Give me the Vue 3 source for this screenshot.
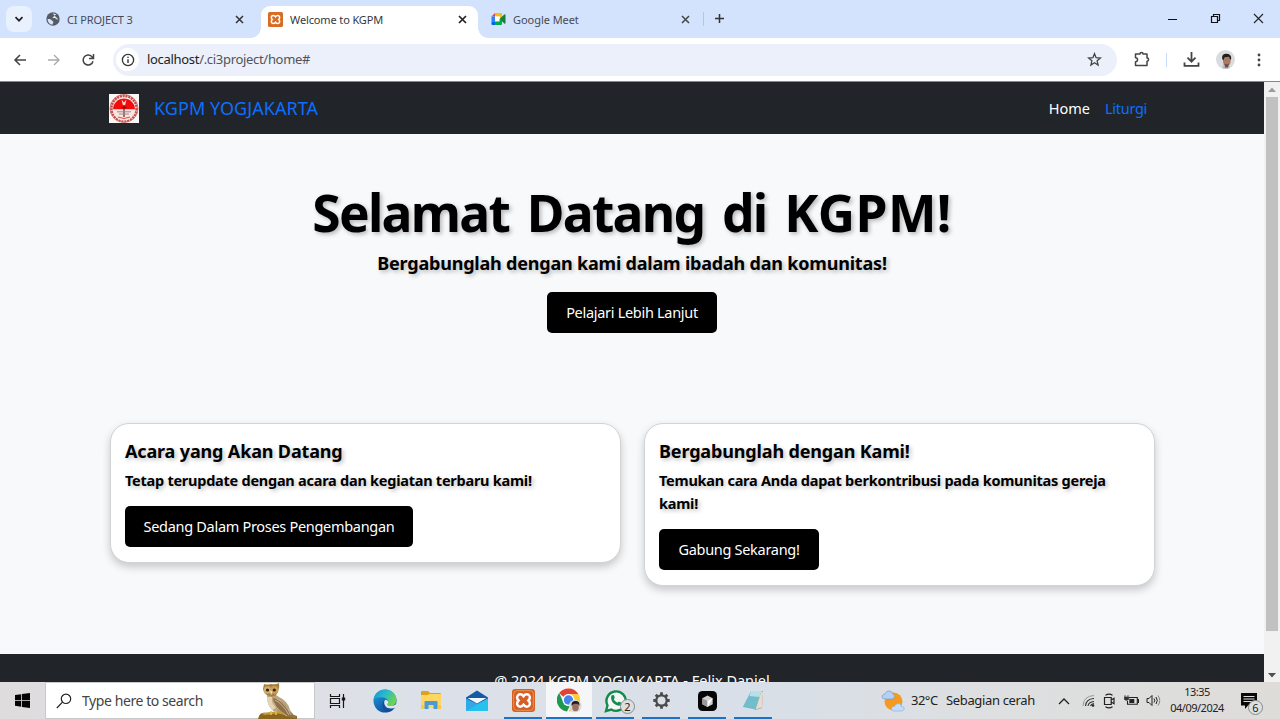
<script setup>
const cards = [
  { id: 'events', title: 'Acara yang Akan Datang', text: 'Tetap terupdate dengan acara dan kegiatan terbaru kami!', action: 'Sedang Dalam Proses Pengembangan' },
  { id: 'join', title: 'Bergabunglah dengan Kami!', text: 'Temukan cara Anda dapat berkontribusi pada komunitas gereja kami!', action: 'Gabung Sekarang!' },
]
</script>

<template>
  <div class="screen">
    <header class="tabstrip">
      <div class="tab-search"><svg width="10" height="10" viewBox="0 0 10 10"><path d="M1.500 3.200L5 6.700l3.500-3.500" fill="none" stroke="#222" stroke-width="1.700" /></svg></div>
      <div class="tab tab-first">
        <svg class="fav" width="14" height="14" viewBox="0 0 14 14"><circle cx="7" cy="7" r="6.700" fill="#565b61" /><path d="M1.500 7.200c2-.6 3.500 0 4.400 1.200.5.900 1.700.6 1.500 1.900-.2 1-.9 1.200-1 2.500C3.600 12.500 1.700 10 1.500 7.200zM6.600 1.400c1 0 2.600.2 3.700 1.100-.9.200-1 .8-1.700.9-.7.200-.4 1.200-1.200 1.400-.9.100-1 .9-.3 1.200.9.500 2-.1 2.800.8.700.8 1.600.7 2.500.6" fill="#d3e2fd" /></svg>
        <span class="tab-title t1">CI PROJECT 3</span>
        <svg class="close" width="9" height="9" viewBox="0 0 9 9"><path d="M1 1l7 7M8 1l-7 7" stroke="#333" stroke-width="1.500" /></svg>
      </div>
      <div class="tab tab-active">
        <svg class="fav" width="15" height="15" viewBox="0 0 28 28"><rect width="28" height="28" rx="3" fill="#d96c25" /><path d="M10 6.500a3.800 3.800 0 0 0-3.800 3.800q0 2 1.800 3.700-1.800 1.700-1.800 3.700a3.800 3.800 0 0 0 3.800 3.800q2.200 0 4-2.300 1.800 2.300 4 2.300a3.800 3.800 0 0 0 3.800-3.800q0-2-1.800-3.700 1.800-1.700 1.800-3.700A3.800 3.800 0 0 0 18 6.500q-2.200 0-4 2.300-1.800-2.300-4-2.300z" fill="none" stroke="#fff" stroke-width="2.800" /></svg>
        <span class="tab-title t2">Welcome to KGPM</span>
        <svg class="close" width="9" height="9" viewBox="0 0 9 9"><path d="M1 1l7 7M8 1l-7 7" stroke="#222" stroke-width="1.700" /></svg>
      </div>
      <div class="tab tab-last">
        <svg class="fav" width="15" height="14" viewBox="0 0 15 14"><path d="M4 1v3.500H.5z" fill="#ea4335" /><path d="M4 1h6q1 0 1 1v3L8.500 7V4.500H4z" fill="#fbbc04" /><path d="M.5 4.500H4v5H.5z" fill="#2684fc" /><path d="M.5 9.500H4V13H1.500q-1 0-1-1z" fill="#0066da" /><path d="M4 4.500h5v5H4z" fill="#fff" /><path d="M4 9.500h4.500V7L11 9v3q0 1-1 1H4z" fill="#00ac47" /><path d="M8.500 7l4.800-4.400q1.200-.7 1.200.5v8q0 1-1.200.4z" fill="#188038" /></svg>
        <span class="tab-title t3">Google Meet</span>
        <svg class="close" width="9" height="9" viewBox="0 0 9 9"><path d="M1 1l7 7M8 1l-7 7" stroke="#444" stroke-width="1.500" /></svg>
      </div>
      <div class="new-tab"><svg width="11" height="11" viewBox="0 0 11 11"><path d="M5.500 1v9M1 5.500h9" stroke="#333" stroke-width="1.500" /></svg></div>
      <div class="window-controls">
        <svg width="11" height="11" viewBox="0 0 11 11"><path d="M1 6.500h9" stroke="#111" stroke-width="1" /></svg>
        <svg width="11" height="11" viewBox="0 0 11 11"><path d="M1.500 3.500h6v6h-6zM3.500 3V1.500h6v6H8" fill="none" stroke="#111" stroke-width="1.200" /></svg>
        <svg width="11" height="11" viewBox="0 0 11 11"><path d="M1 1l9 9M10 1l-9 9" stroke="#222" stroke-width="1.100" /></svg>
      </div>
    </header>

    <div class="toolbar">
      <svg class="nav-ico" width="14" height="14" viewBox="0 0 14 14"><path d="M13 7H2M7 2L2 7l5 5" fill="none" stroke="#444" stroke-width="1.500" /></svg>
      <svg class="nav-ico" width="14" height="14" viewBox="0 0 14 14"><path d="M1 7h11M7 2l5 5-5 5" fill="none" stroke="#aaa" stroke-width="1.400" /></svg>
      <svg class="nav-ico" width="14" height="14" viewBox="0 0 14 14"><path d="M12 8.200A5 5 0 1 1 10.800 3.600L12.300 5M12.500 1v4.500H8" fill="none" stroke="#444" stroke-width="1.500" /></svg>
      <div class="omnibox">
        <span class="info"><svg width="14" height="14" viewBox="0 0 14 14"><circle cx="7" cy="7" r="5.600" fill="none" stroke="#333" stroke-width="1.300" /><path d="M7 6.300V10M7 3.700v1.400" stroke="#333" stroke-width="1.400" /></svg></span>
        <span class="url"><b>localhost</b>/.ci3project/home#</span>
        <svg class="star" width="15" height="15" viewBox="0 0 15 15"><path d="M7.500 1.700l1.600 4 4.300.3-3.300 2.800 1 4.200-3.600-2.300L3.900 13l1-4.200L1.600 6l4.300-.3z" fill="none" stroke="#444" stroke-width="1.300" /></svg>
      </div>
      <div class="tools">
        <svg width="17" height="17" viewBox="0 0 17 17"><path d="M2.500 3H7a1.500 1.500 0 0 1 3 0h4v4a1.600 1.600 0 0 1 0 3.200v4.300H2.500v-3.700a2 2 0 0 0 0-4z" fill="none" stroke="#444" stroke-width="1.500" stroke-linejoin="round" /></svg>
        <i class="divider"></i>
        <svg width="17" height="17" viewBox="0 0 17 17"><path d="M8.500 1v9.500M4.500 6.700l4 4 4-4M1.500 11.500v3.300h14v-3.300" fill="none" stroke="#444" stroke-width="1.800" /></svg>
        <svg width="19" height="19" viewBox="0 0 19 19"><circle cx="9.500" cy="9.500" r="9.500" fill="#d9dcdf" /><path d="M7.500 14h5l1.500 4q-4 1.800-8 .2z" fill="#b9bdc4" /><ellipse cx="10.800" cy="10.500" rx="3.900" ry="5.500" fill="#a87a65" /><path d="M6.200 9Q5.500 4 9.500 3.700q5.500-.5 5.800 4.500l-1 1.700-1.200-3.200-4.500.5-1.200 3z" fill="#221d1c" /><path d="M8.500 13.500q2.500 1.500 4.500 0l-1 4H9z" fill="#705044" /></svg>
        <svg width="4" height="14" viewBox="0 0 4 14"><g fill="#444"><circle cx="2" cy="2" r="1.400" /><circle cx="2" cy="7" r="1.400" /><circle cx="2" cy="12" r="1.400" /></g></svg>
      </div>
    </div>

    <div class="viewport">
      <div class="page">
        <nav class="navbar">
          <svg class="brand-logo" width="30" height="29" viewBox="0 0 30 29"><rect width="30" height="29" fill="#fbf6f4" /><circle cx="15" cy="14.500" r="12.700" fill="none" stroke="#c4504d" stroke-width="2.800" stroke-dasharray="2.200 .7" /><circle cx="15" cy="14.500" r="14" fill="none" stroke="#c9706c" stroke-width=".8" /><path d="M4 15.500a11 11 0 0 1 22 0z" fill="#f20c0c" /><path d="M4 15.500a11 11 0 0 0 22 0z" fill="#f6e6e3" /><path d="M12.500 5.500l2.500 3 2.500-3-1.500 6h-2z" fill="#ffd7ce" /><path d="M15 11v12M12.500 13.500h5" stroke="#5b2022" stroke-width="1.200" /><path d="M8 17.800h14M10 20h10" stroke="#a98482" stroke-width="1" /><path d="M9 23q6 3 12 0" fill="none" stroke="#d64d49" /></svg>
          <a class="brand">KGPM YOGJAKARTA</a>
          <div class="nav-links"><a class="nav-home">Home</a><a class="nav-liturgi">Liturgi</a></div>
        </nav>
        <section class="hero">
          <h1>Selamat Datang di <span>KGPM!</span></h1>
          <p class="lead">Bergabunglah dengan kami dalam ibadah dan komunitas!</p>
          <a class="btn btn-hero">Pelajari Lebih Lanjut</a>
        </section>
        <section class="cards">
          <article v-for="card in cards" :key="card.id" class="card" :class="card.id">
            <h2>{{ card.title }}</h2>
            <p>{{ card.text }}</p>
            <a class="btn">{{ card.action }}</a>
          </article>
        </section>
        <footer class="footer">@ 2024 KGPM YOGJAKARTA - Felix Daniel</footer>
      </div>
      <div class="scrollbar">
        <svg width="8" height="5" viewBox="0 0 8 5"><path d="M0 5l4-4.500L8 5z" fill="#9b9b9b" /></svg>
        <div class="thumb"></div>
        <svg width="8" height="5" viewBox="0 0 8 5"><path d="M0 0h8L4 4.500z" fill="#505050" /></svg>
      </div>
    </div>

    <div class="taskbar">
      <div class="start"><svg width="15" height="15" viewBox="0 0 15 15"><path d="M0 2.100L6.200 1.200V7H0zM7 1.100L15 0v7H7zM0 7.800h6.200v5.900L0 12.800zM7 7.800h8V15l-8-1.100z" fill="#050505" /></svg></div>
      <div class="search">
        <svg width="16" height="16" viewBox="0 0 16 16"><circle cx="10" cy="5.800" r="4.700" fill="none" stroke="#222" stroke-width="1.200" /><path d="M6.500 9.200L.8 15" stroke="#222" stroke-width="1.200" /></svg>
        <span>Type here to search</span>
        <svg class="owl" width="42" height="36" viewBox="0 0 42 36"><path d="M2 33q2-4 7-3l15-1q7 1 16 4v3H1z" fill="#8a651f" /><path d="M10 12q7-3 12 2 9 4 11 13l6 8q-10-2-18-5-11-3-11-18z" fill="#bda480" /><path d="M16 15q11 2 16 13l8 7q-12 0-18-7-5-6-6-13z" fill="#8e7048" /><path d="M18 17q8 4 14 15M20 16q9 5 14 16M17 20q3 7 13 13" fill="none" stroke="#d7c4a1" stroke-width=".8" /><path d="M7 1q3 1 7 0 5 1 8-1 1 4-1 9-3 6-8 4-6-1-7-7z" fill="#a67f3e" /><circle cx="10.500" cy="7" r="3.700" fill="#d3ae6c" /><circle cx="17.300" cy="7" r="3.900" fill="#c99e55" /><circle cx="10.500" cy="7" r="1.600" fill="#2b2419" /><circle cx="17.300" cy="7" r="1.600" fill="#2b2419" /><path d="M13 7.500l1 5 1.500-4z" fill="#ede1bd" /><path d="M10 14q0 8 5 13l4-2q-5-5-4-11z" fill="#e2d4b5" /><path d="M5 30l18-2 4 2-20 2z" fill="#c19b35" /><path d="M14 28v4M19 28v4" stroke="#e2bd56" stroke-width="1.500" /></svg>
      </div>
      <div class="apps">
        <div class="app task-view"><svg width="17" height="16" viewBox="0 0 17 16"><path d="M1.500 1v2.500h9V1M1.500 15v-2.500h9V15M1.500 5.500h9v5h-9zM14.500 1v14" fill="none" stroke="#161616" stroke-width="1.200" /><path d="M12.800 4.500h3.400v3h-3.400z" fill="#161616" /></svg></div>
        <div class="app"><svg width="24" height="24" viewBox="0 0 24 24"><defs><linearGradient id="edge-a" x1="0" y1="0" x2="1" y2=".5"><stop stop-color="#1b8fd5" /><stop offset=".5" stop-color="#28b9cf" /><stop offset="1" stop-color="#6bd34c" /></linearGradient><linearGradient id="edge-b" x1="0" y1="0" x2=".6" y2="1"><stop stop-color="#1aa4df" /><stop offset="1" stop-color="#124c9c" /></linearGradient></defs><circle cx="12" cy="12" r="11.500" fill="url(#edge-b)" /><path d="M.6 11C1.500 4.500 6.500.5 12 .5c7 0 11.500 5 11.500 10.500 0 4-3 6-6 6-2.800 0-3.700-1-2.700-2.500C16 11 13 8.500 9.500 8.500 5 8 2 9 .6 11z" fill="url(#edge-a)" /><path d="M12.500 10.500c-3 2.200-1.200 8.500 5 8.500 2 0 4-.8 5-1.500-1.200 2.500-4 5.500-8 5.500C8 22 7.800 13 12.500 10.500z" fill="#124f9e" /><path d="M12.200 10.700c3 .3 3.600 2.300 2.600 3.800-1 1.500 0 2.500 2.700 2.500 2.200 0 4-.8 6.500-2.200l-1 3.400q-3 1.500-6.500 1.100c-5-.5-6.500-6-4.300-8.600z" fill="#dfe3ea" /></svg></div>
        <div class="app"><svg width="22" height="20" viewBox="0 0 22 20"><path d="M1 1q0-1 1-1h6l2 2h10q1 0 1 1v3H1z" fill="#dda318" /><path d="M9 3h12v14H1V4h7z" fill="#fed664" /><path d="M4.500 18v-7q0-1 1-1h11q1 0 1 1v7h-4v-4h-5v4z" fill="#4a9bd3" /><path d="M1 14h3v4H1zM18 14h3v4h-3z" fill="#fbc951" /></svg></div>
        <div class="app"><svg width="24" height="22" viewBox="0 0 24 22"><path d="M1 7.500L12 .5l11 7V21H1z" fill="#135ba6" /><path d="M1 8.500L12 14l11-5.500V21H1z" fill="#32a9e7" /><path d="M1 21L23 8.500V21z" fill="#27c1ed" /><path d="M2.500 8h19L12 13.500z" fill="#f5f7fa" /></svg></div>
        <div class="app running"><svg width="23" height="23" viewBox="0 0 28 28"><rect width="28" height="28" rx="4" fill="#d65f25" /><rect x="2" y="2" width="24" height="24" rx="4" fill="none" stroke="#ef9c55" stroke-width="1" /><path d="M10 6.500a3.800 3.800 0 0 0-3.800 3.800q0 2 1.800 3.700-1.800 1.700-1.800 3.700a3.800 3.800 0 0 0 3.800 3.800q2.200 0 4-2.300 1.800 2.300 4 2.300a3.800 3.800 0 0 0 3.800-3.800q0-2-1.800-3.700 1.800-1.700 1.800-3.700A3.800 3.800 0 0 0 18 6.500q-2.200 0-4 2.300-1.800-2.300-4-2.300z" fill="none" stroke="#fff" stroke-width="3" /></svg></div>
        <div class="app running active"><svg width="25" height="25" viewBox="0 0 25 25"><path d="M11.500.5a11.500 11.500 0 0 1 10 5.700H11.500a5.800 5.800 0 0 0-5 2.900L2.200 5A11.500 11.500 0 0 1 11.500.5z" fill="#e44234" /><path d="M2.200 5l4.300 9.500a5.800 5.800 0 0 0 6.500 3L10 23.400A11.500 11.500 0 0 1 2.200 5z" fill="#1e9950" /><path d="M11.500 6.200h10a11.500 11.500 0 0 1-10 17.300l5-8.500z" fill="#fdcd33" /><circle cx="11.500" cy="12" r="6" fill="#fff" /><circle cx="11.500" cy="12" r="4.700" fill="#4584ef" /><circle cx="18.300" cy="18" r="6.300" fill="#d9d9d8" /><ellipse cx="18.500" cy="19" rx="3.300" ry="4.300" fill="#9b7060" /><path d="M14.700 18q-1-5 4-5 4.500 0 3.600 5l-1.500-2.300h-4z" fill="#1d1919" /></svg></div>
        <div class="app running whatsapp"><svg width="23" height="24" viewBox="0 0 23 24"><path d="M2 22l1.500-5.500A9.700 9.700 0 1 1 7.300 20.500z" fill="#f2f7f4" stroke="#148a4d" stroke-width="2.400" /><path d="M7.600 6.300l2.200-.3 1 2.800-1 1.400q1.100 2.600 3.700 3.600l1.400-1.400 2.500 1.300q0 3-2.700 3C10 16.500 5.500 11 7.600 6.300z" fill="#16894f" /></svg><span class="badge">2</span></div>
        <div class="app running"><svg width="19" height="19" viewBox="0 0 19 19"><circle cx="9.500" cy="9.500" r="5.200" fill="none" stroke="#4a4b4d" stroke-width="2.300" /><g stroke="#4a4b4d" stroke-width="2.800"><path d="M9.500 1.300v3M9.500 14.700v3M1.300 9.500h3M14.700 9.500h3M3.700 3.700l2 2M13.300 13.300l2 2M15.300 3.700l-2 2M5.700 13.300l-2 2" /></g></svg></div>
        <div class="app running"><svg width="19" height="20" viewBox="0 0 19 20"><rect width="19" height="20" rx="4.500" fill="#060606" /><path d="M9.500 4.500l5.200 2.800v6L9.500 16l-5.200-2.700v-6z" fill="#d0d0d0" /><path d="M4.300 7.300L9.500 10v6l-5.200-2.700z" fill="#999" /><path d="M9.500 10l5.200-2.700L9.500 16z" fill="#fff" /></svg></div>
        <div class="app running"><svg width="23" height="21" viewBox="0 0 23 21"><path d="M9 1h12l-1 17-7 2z" fill="#9b8b68" /><path d="M9 1h10.500L13.500 19.500.8 17z" fill="#72bdcb" /><path d="M9 1h10.500l-2 6-10-1z" fill="#b7e1e6" /><path d="M19.500 1l1.500 1-1 15.500-6.500 2z" fill="#e2ddd0" /></svg></div>
      </div>
      <div class="tray">
        <svg class="weather" width="24" height="22" viewBox="0 0 24 22"><circle cx="12.500" cy="11.500" r="9" fill="#f59a20" /><path d="M4 9q-3.500 0-3-3 .7-2 3-2 1-3.500 4.500-3Q11 1 11.800 4q2.500.8 1.500 3.300Q12.500 9 11 9z" fill="#b5d0f4" stroke="#719dd8" stroke-width=".7" /><path d="M14 21q-4 .3-3.500-2.700.5-2 3-2 1.500-3.500 5-2.600 1.500.8 2 2.800 3 0 2.800 2.500-.5 2-3 2z" fill="#c5dcf8" stroke="#8eb3e4" stroke-width=".7" /></svg>
        <span class="temp">32°C</span><span class="condition">Sebagian cerah</span>
        <svg class="chev" width="12" height="8" viewBox="0 0 12 8"><path d="M1 7l5-5 5 5" fill="none" stroke="#222" stroke-width="1.300" /></svg>
        <svg class="wifi" width="13" height="13" viewBox="0 0 13 13"><path d="M1 12Q1.500 2 12 1.500" fill="none" stroke="#999" /><path d="M3.500 12Q4 5 12 4.500M6 12Q6.500 8 12 7.500M8.500 12q.5-2 3.500-2.500" fill="none" stroke="#333" stroke-width="1.100" /><circle cx="11" cy="11.500" r="1.300" fill="#222" /></svg>
        <svg class="meet" width="12" height="16" viewBox="0 0 12 16"><path d="M2.500 2.200Q6 0 9.500 2.200M2.500 13.800q3.500 2.200 7 0M1.500 4.500h6.700v7H1.500zM8.200 7L11 5.300v5.400L8.200 9" fill="none" stroke="#222" stroke-width="1.200" /></svg>
        <svg class="battery" width="15" height="11" viewBox="0 0 15 11"><path d="M5 2.500h8.300v6.800H3.500V6M13.300 4.500h1.200v3h-1.200" fill="none" stroke="#222" stroke-width="1.100" /><path d="M5.300 4h5v4h-5z" fill="#222" /><path d="M1 0v2M4 0v2M.2 2h4.600v2q-.5 1.300-2.300 1.300T.2 4z" fill="#333" stroke="#333" stroke-width=".7" /></svg>
        <svg class="volume" width="15" height="13" viewBox="0 0 15 13"><path d="M1 4.500h2L6 1.500v10L3 8.500H1zM8 4.500q1.500 2 0 4M10 3q2.600 3.500 0 7" fill="none" stroke="#222" stroke-width="1" /><path d="M12 1.500q3.500 5 0 10" fill="none" stroke="#888" /></svg>
        <div class="clock"><span class="time">13:35</span><span class="date">04/09/2024</span></div>
        <div class="notify"><svg width="16" height="16" viewBox="0 0 16 16"><path d="M0 0h16v12.500H7L4 16v-3.500H0z" fill="#080808" /><path d="M2.500 3.500h11M2.500 6h11M2.500 8.500h11" stroke="#ddd" /></svg><span class="badge">6</span></div>
      </div>
    </div>
  </div>
</template>

<style>
body { overflow: hidden; }
</style>
<style scoped>
* { box-sizing: border-box; }
.screen { width: 1280px; height: 719px; overflow: hidden; display: flex; flex-direction: column; font-family: "Noto Sans", "Open Sans", sans-serif; white-space: nowrap; background: #fff; }
svg { display: block; flex: none; }
h1, h2, p { margin: 0; }
.tabstrip { height: 38px; flex: none; background: #d3e2fd; display: flex; }
.tab-search { width: 26px; height: 26px; margin: 6px 0 0 6px; border-radius: 8px; background: #e9f0fe; display: grid; place-items: center; }
.tab { display: flex; align-items: center; font-size: 11px; color: #474b52; height: 38px; }
.tab-title { flex: 1; }
.tab-first { width: 229px; padding: 0 17px 0 14px; }
.tab-active { width: 217px; height: 33px; margin-top: 6px; padding: 0 11px 7px 7px; background: #fff; border-radius: 9px 9px 0 0; position: relative; color: #35383d; }
.tab-active::before, .tab-active::after { content: ""; position: absolute; bottom: 1px; width: 10px; height: 10px; }
.tab-active::before { left: -10px; background: radial-gradient(circle at 0 0, transparent 9.500px, #fff 10px); }
.tab-active::after { right: -10px; background: radial-gradient(circle at 100% 0, transparent 9.500px, #fff 10px); }
.tab-last { width: 226px; padding: 0 14px 0 13px; }
.fav { margin-right: 7px; }
.t1 { letter-spacing: -.1px; }
.t2 { letter-spacing: -.13px; }
.t3 { letter-spacing: -.05px; }
.new-tab { height: 14px; margin-top: 12px; border-left: 1px solid #a8c7fa; margin-left: -1px; padding: 1px 0 0 10px; }
.window-controls { margin-left: auto; padding: 13px 16px 0 0; display: flex; gap: 32px; }
.toolbar { height: 43px; flex: none; background: #fff; border-radius: 8px 8px 0 0; display: flex; align-items: center; padding-left: 13px; }
.nav-ico { margin-right: 20px; }
.nav-ico:nth-child(3) { margin-right: 18px; }
.omnibox { width: 1004px; height: 32px; background: #ebf0fa; border-radius: 16px; display: flex; align-items: center; padding: 0 15px 0 3px; font-size: 13px; color: #50545a; }
.info { width: 23px; height: 23px; border-radius: 50%; background: #fff; display: grid; place-items: center; }
.url { margin-left: 8px; flex: 1; letter-spacing: -.31px; line-height: 18px; margin-top: -1px; }
.url b { font-weight: 400; color: #222; }
.tools { display: flex; align-items: center; flex: 1; padding-left: 16px; }
.tools svg:nth-of-type(2) { margin: 0 16px 0 16px; }
.tools svg:nth-of-type(3) { margin-right: 22px; }
.divider { width: 1px; height: 14px; background: #c9dafa; margin-left: 16px; }
.viewport { height: 601px; flex: none; display: flex; border-top: 1px solid #85898e; }
.page { width: 1264px; background: #f8f9fb; overflow: hidden; display: flex; flex-direction: column; }
.navbar { height: 52px; flex: none; background: #212529; display: flex; align-items: center; padding: 0 117px 0 109px; }
.brand { color: #0d6efd; font-size: 18px; margin-left: 15px; letter-spacing: .05px; }
.nav-links { margin-left: auto; display: flex; gap: 15px; font-size: 14.500px; }
.nav-home { color: #fff; }
.nav-liturgi { color: #0d6efd; letter-spacing: -.3px; }
.hero { height: 289px; flex: none; display: flex; flex-direction: column; align-items: center; padding-top: 47px; color: #000; }
h1 { font-size: 51.500px; line-height: 63px; font-weight: 700; text-shadow: 2px 2px 4px #0004; letter-spacing: -1.700px; word-spacing: 6px; }
h1 span { letter-spacing: .4px; }
.lead { margin-top: 5px; font-size: 18px; line-height: 28px; font-weight: 700; text-shadow: 2px 2px 4px #0004; letter-spacing: -.2px; }
.btn { display: inline-flex; align-items: center; justify-content: center; background: #000; color: #fff; border-radius: 5px; height: 41px; width: 288px; padding-bottom: 1px; font-size: 14.500px; letter-spacing: -.3px; }
.btn-hero { margin-top: 15px; width: 170px; }
.cards { height: 231px; flex: none; display: flex; gap: 23px; padding: 0 109px 0 110px; align-items: flex-start; }
.card { width: 511px; border: 1px solid #d1d3d5; background: #fff; border-radius: 19px; padding: 15px 14px 15px; box-shadow: 0 4px 8px #0003; white-space: normal; }
h2 { font-size: 18px; line-height: 24px; font-weight: 700; text-shadow: 2px 2px 4px #0004; letter-spacing: -.15px; }
.card p { margin: 6px 0 14.500px; font-size: 14.500px; line-height: 22.500px; font-weight: 700; text-shadow: 2px 2px 4px #0004; letter-spacing: -.25px; }
.card .btn { display: flex; }
.join .btn { width: 160px; }
.footer { height: 60px; flex: none; background: #212529; color: #fff; text-align: center; font-size: 14.500px; line-height: 22px; padding-top: 15px; }
.scrollbar { width: 16px; background: #f1f1f1; display: flex; flex-direction: column; align-items: center; padding: 5px 0 4px; }
.thumb { width: 12px; height: 534px; background: #c1c1c1; margin: 5px 0 auto; }
.taskbar { height: 37px; flex: none; background: linear-gradient(90deg, #dfdcdd 0, #dce1e9 35%, #d9dfe8 60%, #dedfe0 80%, #dddcd9 100%); display: flex; }
.start { width: 45px; display: grid; place-items: center; }
.search { width: 270px; border: 1px solid #c8c8c9; background: #fff; display: flex; align-items: center; padding-left: 10px; font-size: 14px; color: #444; }
.search span { margin-left: 10px; letter-spacing: -.42px; }
.owl { margin-left: auto; margin-right: 15px; }
.apps { display: flex; margin-left: 1px; }
.app { width: 46px; display: grid; place-items: center; position: relative; }
.task-view { padding-right: 3px; }
.app.active { background: #f4f6f8; }
.running::after { content: ""; position: absolute; left: 4px; right: 4px; bottom: 0; height: 2px; background: #1774c9; }
.active::after { left: 0; right: 0; }
.badge { position: absolute; width: 15px; height: 15px; border: 1px solid #888; border-radius: 50%; background: #dde0e3; color: #222; font-size: 11px; line-height: 13px; text-align: center; }
.whatsapp .badge { right: 3px; top: 17px; }
.tray { margin-left: auto; display: flex; align-items: center; font-size: 13px; color: #222; }
.tray > span { margin-top: -1px; }
.temp { margin-left: 6px; width: 35px; letter-spacing: -.5px; }
.condition { width: 90px; letter-spacing: -.35px; }
.chev { margin-left: 22px; }
.wifi { margin-left: 12px; }
.meet { margin-left: 8px; }
.battery { margin-left: 9px; }
.volume { margin-left: 7px; }
.clock { width: 56px; margin-left: 8px; font-size: 11px; line-height: 16px; text-align: center; display: flex; flex-direction: column; letter-spacing: -.5px; margin-top: -2px; }
.notify { position: relative; margin: 0 23px 0 16px; }
.notify .badge { left: 7px; top: 7px; }
</style>
